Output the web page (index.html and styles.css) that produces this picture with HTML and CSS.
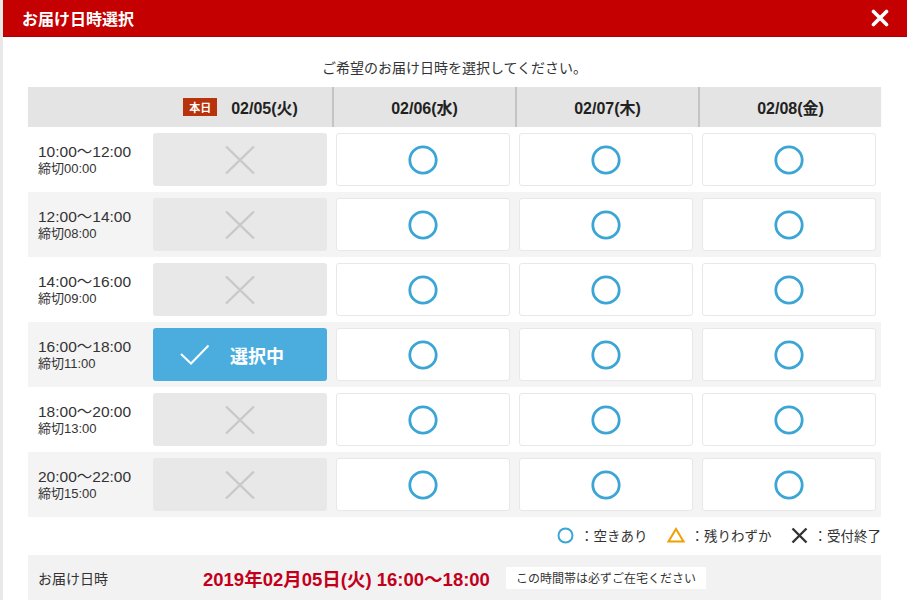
FILE: index.html
```html
<!DOCTYPE html>
<html lang="ja">
<head>
  <meta charset="UTF-8" />
  <meta name="viewport" content="width=device-width, initial-scale=1.0"/>
  <title>お届け日時選択</title>
  <link rel="stylesheet" href="styles.css">
</head>
<body>
  <div class="modal">
    <div class="modal-head">
      <h1>お届け日時選択</h1>
      <span class="close">
        <svg width="18" height="18" viewBox="0 0 18 18"><path d="M2.5 2.5 L15.5 15.5 M15.5 2.5 L2.5 15.5" stroke="#fff" stroke-width="3.6" stroke-linecap="round"/></svg>
      </span>
    </div>

    <div class="modal-body">
      <p class="lead">ご希望のお届け日時を選択してください。</p>

      <div class="grid head">
        <div class="hcell"></div>
        <div class="hcell"><span class="today">本日</span>02/05(火)</div>
        <div class="hcell sep">02/06(水)</div>
        <div class="hcell sep">02/07(木)</div>
        <div class="hcell sep">02/08(金)</div>
      </div>

      <div id="rows"></div>

      <div class="legend">
        <span class="mark">
          <svg width="17" height="17" viewBox="0 0 17 17"><circle cx="8.5" cy="8.5" r="7" fill="none" stroke="#3ba6d6" stroke-width="2"/></svg>
        </span>：空きあり
        <span class="mark">
          <svg width="18" height="16" viewBox="0 0 18 16"><path d="M9 2 L16.5 14.5 L1.5 14.5 Z" fill="none" stroke="#f0a000" stroke-width="2" stroke-linejoin="miter"/></svg>
        </span>：残りわずか
        <span class="mark">
          <svg width="17" height="17" viewBox="0 0 17 17"><path d="M1.5 1.5 L15.5 15.5 M15.5 1.5 L1.5 15.5" stroke="#333" stroke-width="2.4"/></svg>
        </span>：受付終了
      </div>

      <div class="summary">
        <span class="summary-label">お届け日時</span>
        <strong class="summary-value">2019年02月05日(火) 16:00〜18:00</strong>
        <span class="notice">この時間帯は必ずご在宅ください</span>
      </div>
    </div>
  </div>

  <script>
    const slots = [
      { time: "10:00〜12:00", limit: "締切00:00" },
      { time: "12:00〜14:00", limit: "締切08:00" },
      { time: "14:00〜16:00", limit: "締切09:00" },
      { time: "16:00〜18:00", limit: "締切11:00" },
      { time: "18:00〜20:00", limit: "締切13:00" },
      { time: "20:00〜22:00", limit: "締切15:00" }
    ];
    const selectedRow = 3;

    const circle = '<svg width="30" height="30" viewBox="0 0 30 30"><circle cx="15" cy="15" r="13.2" fill="none" stroke="#3ba6d6" stroke-width="2.8"/></svg>';
    const cross = '<svg width="30" height="28" viewBox="0 0 30 28"><path d="M1 0.5 L29 27.5 M29 0.5 L1 27.5" stroke="#c9c9c9" stroke-width="2.4"/></svg>';
    const check = '<svg width="30" height="22" viewBox="0 0 30 22"><path d="M1 10 L11 19.5 L28.5 1.5" fill="none" stroke="#fff" stroke-width="2"/></svg>';

    const rowsDiv = document.getElementById("rows");
    slots.forEach((slot, i) => {
      const row = document.createElement("div");
      row.className = "grid row" + (i % 2 ? " alt" : "");
      let html = '<div class="time"><span class="time-range">' + slot.time + '</span><span class="time-limit">' + slot.limit + '</span></div>';
      if (i === selectedRow) {
        html += '<div class="cell selected">' + check + '<span>選択中</span></div>';
      } else {
        html += '<div class="cell closed">' + cross + '</div>';
      }
      for (let d = 0; d < 3; d++) {
        html += '<div class="cell open">' + circle + '</div>';
      }
      row.innerHTML = html;
      rowsDiv.appendChild(row);
    });
  </script>
</body>
</html>
```

FILE: styles.css
```css
body {
  margin: 0;
  background-color: #e9e9e9;
  font-family: "Liberation Sans", "Noto Sans CJK JP", sans-serif;
  color: #333;
}
.modal {
  margin-left: 3px;
  min-height: 600px;
  background-color: #fff;
}
.modal-head {
  height: 36px;
  background-color: #c40000;
  border-bottom: 1px solid #a80000;
  display: flex;
  align-items: center;
  justify-content: space-between;
  padding: 0 19px;
}
.modal-head h1 {
  margin: 0;
  color: #fff;
  font-size: 16px;
  font-weight: bold;
  font-family: "Noto Sans CJK JP", sans-serif;
}
.close {
  display: flex;
  margin-right: -1px;
}
.modal-body {
  padding: 0 26px 0 25px;
}
.lead {
  margin: 0;
  padding: 21px 0 9px;
  line-height: 20px;
  text-align: center;
  font-size: 14px;
  color: #333;
}
.grid {
  display: grid;
  grid-template-columns: 121px repeat(4, 1fr);
}
.head {
  height: 40px;
  background-color: #e4e4e4;
  box-shadow: 0 1px 1px rgba(0, 0, 0, 0.08);
}
.hcell {
  display: flex;
  align-items: center;
  justify-content: center;
  font-size: 16px;
  font-weight: bold;
  color: #222;
}
.hcell.sep {
  border-left: 2px solid #c4c4c4;
}
.today {
  display: inline-block;
  background-color: #b8320c;
  color: #fff;
  font-size: 11px;
  font-family: "Noto Sans CJK JP", sans-serif;
  line-height: 18px;
  padding: 0 6px;
  margin-right: 14px;
}
.row {
  height: 65px;
  background-color: #fff;
}
.row.alt {
  background-color: #f4f4f4;
}
.time {
  display: flex;
  flex-direction: column;
  justify-content: center;
  padding-left: 10px;
}
.time-range {
  font-size: 15.5px;
  line-height: 19px;
  color: #333;
}
.time-limit {
  font-size: 13px;
  line-height: 16px;
  color: #333;
}
.cell {
  margin: 6px 5px 6px 4px;
  border-radius: 3px;
  display: flex;
  align-items: center;
  justify-content: center;
}
.cell.open {
  background-color: #fff;
  border: 1px solid #e8e8e8;
}
.cell.closed {
  background-color: #e8e8e8;
}
.cell.selected {
  background-color: #4badde;
  color: #fff;
  gap: 20px;
  font-size: 18px;
  font-weight: bold;
  font-family: "Noto Sans CJK JP", sans-serif;
}
.cell.selected svg {
  margin-left: -16px;
}
.legend {
  display: flex;
  align-items: center;
  justify-content: flex-end;
  margin: 8px 0 10px;
  line-height: 20px;
  font-size: 13.5px;
  font-family: "Noto Sans CJK JP", sans-serif;
  color: #333;
}
.mark {
  display: flex;
  margin: 0 6px 0 19px;
}
.mark:first-child {
  margin-left: 0;
}
.summary {
  display: flex;
  align-items: center;
  height: 45px;
  padding: 0 10px;
  background-color: #f2f2f2;
}
.summary-label {
  width: 165px;
  font-size: 14px;
  font-family: "Noto Sans CJK JP", sans-serif;
}
.summary-value {
  font-size: 18.5px;
  color: #c3001b;
}
.notice {
  margin-left: 16px;
  background-color: #fff;
  font-size: 12px;
  font-family: "Noto Sans CJK JP", sans-serif;
  line-height: 22px;
  padding: 0 10px;
}
```
